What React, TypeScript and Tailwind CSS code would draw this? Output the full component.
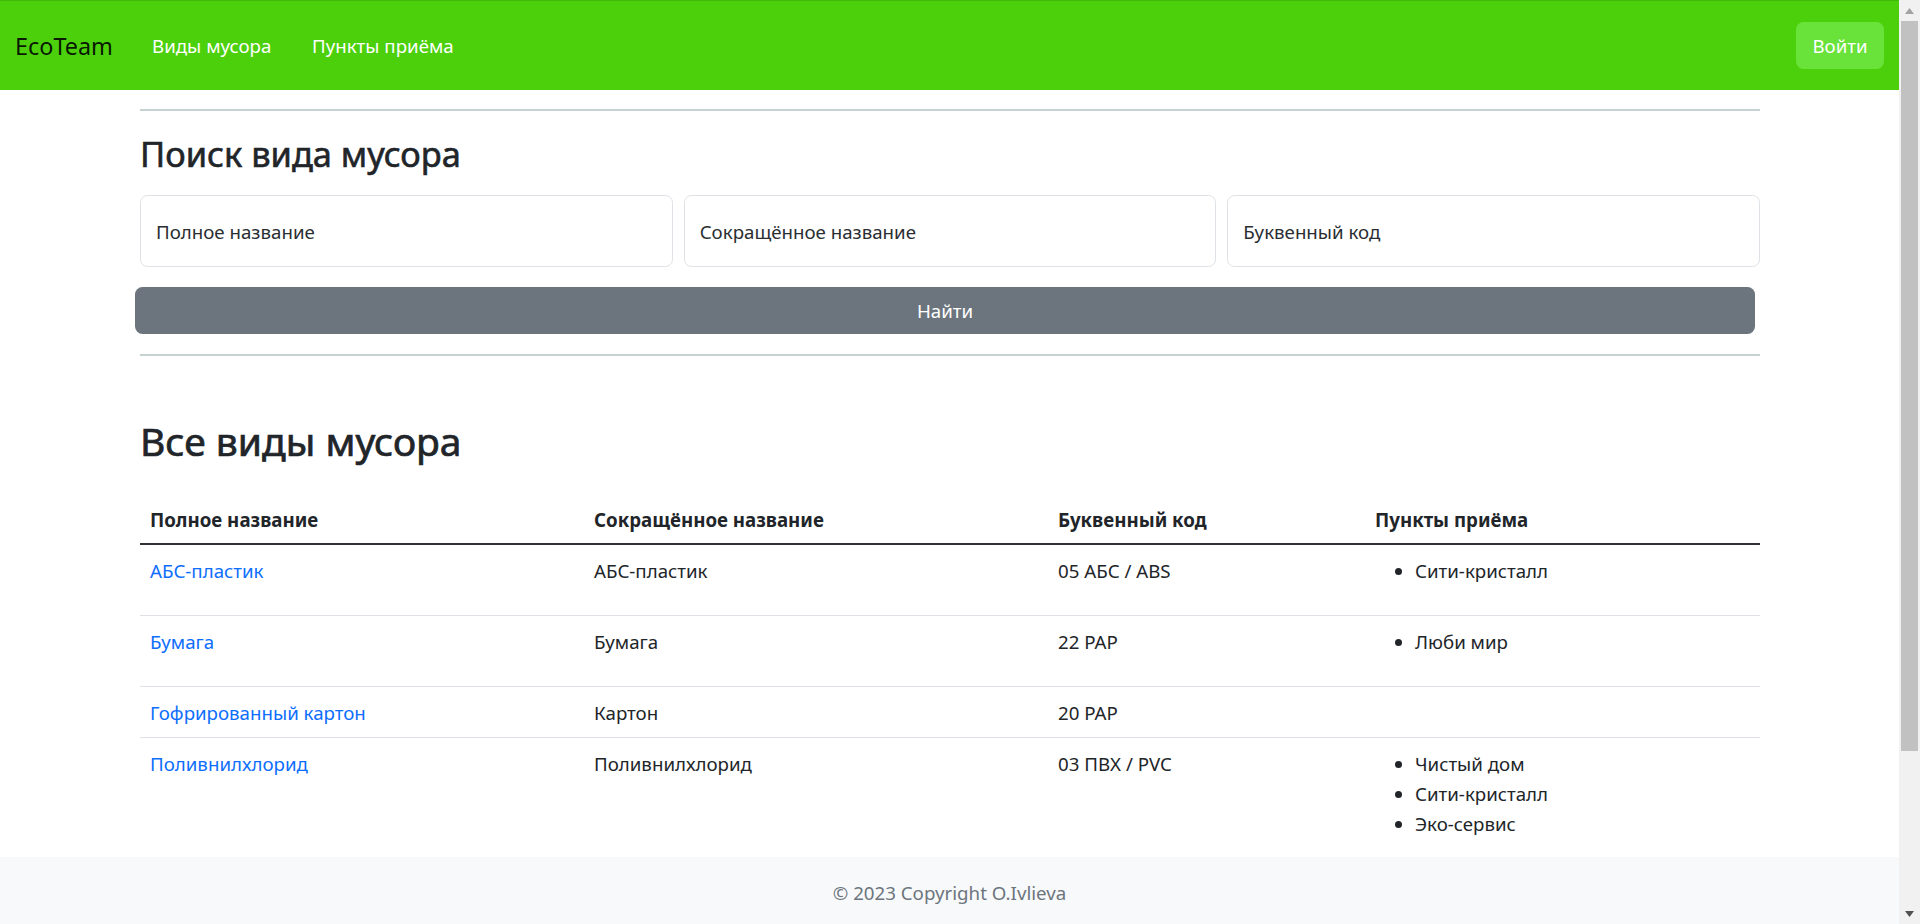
import React from "react";

type WasteRow = {
  full: string;
  short: string;
  code: string;
  points: string[];
};

const rows: WasteRow[] = [
  { full: "АБС-пластик", short: "АБС-пластик", code: "05 АБС / ABS", points: ["Сити-кристалл"] },
  { full: "Бумага", short: "Бумага", code: "22 PAP", points: ["Люби мир"] },
  { full: "Гофрированный картон", short: "Картон", code: "20 PAP", points: [] },
  {
    full: "Поливнилхлорид",
    short: "Поливнилхлорид",
    code: "03 ПВХ / PVC",
    points: ["Чистый дом", "Сити-кристалл", "Эко-сервис"],
  },
];

const Navbar = () => (
  <nav className="h-[90px] shrink-0 bg-[#4bd00b] border-t border-[#43b90b] flex items-center justify-between pl-[15px] pr-[15px]">
    <div className="flex items-center">
      <a href="#" className="w-[137px] text-[23.4px] leading-[30px] text-black/90">
        EcoTeam
      </a>
      <a href="#" className="w-[160px] text-[18.7px] leading-[30px] text-white">
        Виды мусора
      </a>
      <a href="#" className="text-[18.7px] leading-[30px] text-white">
        Пункты приёма
      </a>
    </div>
    <button className="h-[47px] w-[88px] rounded-[7.5px] bg-[#69e23a] text-white text-[18.7px] leading-[30px]">
      Войти
    </button>
  </nav>
);

const SearchField = ({ label }: { label: string }) => (
  <div className="h-[72px] rounded-[7.5px] border border-[#dee2e6] bg-white flex items-center px-[15px] pt-[1px]">
    <span className="text-[18.7px] leading-[30px] text-[#2a2e32]">{label}</span>
  </div>
);

const Scrollbar = () => (
  <div className="w-[21px] h-[924px] shrink-0 bg-[#f1f1f1] flex flex-col items-center">
    <div className="h-[21px] w-full flex items-center justify-center">
      <svg width="9" height="6" viewBox="0 0 9 6">
        <path d="M0 6 L4.5 0 L9 6 Z" fill="#a3a3a3" />
      </svg>
    </div>
    <div className="w-[17px] h-[730px] bg-[#c1c1c1]" />
    <div className="flex-1" />
    <div className="h-[21px] w-full flex items-center justify-center">
      <svg width="9" height="6" viewBox="0 0 9 6">
        <path d="M0 0 L9 0 L4.5 6 Z" fill="#505050" />
      </svg>
    </div>
  </div>
);

export default function App() {
  return (
    <div className="flex h-[924px] overflow-hidden bg-white font-['Noto_Sans',sans-serif] text-[#212529]">
      <div className="flex-1 min-w-0 h-[927px] flex flex-col">
        <Navbar />
        <main className="flex-1 overflow-hidden">
          <div className="w-[1620px] ml-[140px]">
            <div className="mt-[19px] h-[2px] bg-[#c4d2d2]" />
            <h3 className="mt-[22px] text-[34.4px] leading-[42px] font-normal [-webkit-text-stroke:0.6px_#212529]">
              Поиск вида мусора
            </h3>
            <div className="mt-[20px] grid grid-cols-3 gap-[11px]">
              <SearchField label="Полное название" />
              <SearchField label="Сокращённое название" />
              <SearchField label="Буквенный код" />
            </div>
            <button className="mt-[20px] -ml-[5px] w-[1620px] h-[47px] rounded-[7.5px] bg-[#6c757d] text-white text-[18.7px] leading-[30px] block">
              Найти
            </button>
            <div className="mt-[20px] h-[2px] bg-[#c4d2d2]" />
            <h2 className="mt-[61px] text-[39px] leading-[48px] font-normal [-webkit-text-stroke:0.7px_#212529]">
              Все виды мусора
            </h2>
            <table className="mt-[28px] w-full table-fixed border-separate border-spacing-0 text-[18.7px] leading-[30px]">
              <colgroup>
                <col className="w-[444px]" />
                <col className="w-[464px]" />
                <col className="w-[317px]" />
                <col className="w-[395px]" />
              </colgroup>
              <thead>
                <tr>
                  {["Полное название", "Сокращённое название", "Буквенный код", "Пункты приёма"].map((h) => (
                    <th key={h} className="text-left font-bold px-[10px] pt-[12px] pb-[8px] border-b-2 border-[#2f3337]">
                      {h}
                    </th>
                  ))}
                </tr>
              </thead>
              <tbody>
                {rows.map((r) => (
                  <tr key={r.full}>
                    <td className="align-top px-[10px] pt-[11px] pb-[9px] border-b border-[#dee2e6]">
                      <a href="#" className="text-[#0d6efd]">
                        {r.full}
                      </a>
                    </td>
                    <td className="align-top px-[10px] pt-[11px] pb-[9px] border-b border-[#dee2e6]">{r.short}</td>
                    <td className="align-top px-[10px] pt-[11px] pb-[9px] border-b border-[#dee2e6]">{r.code}</td>
                    <td className="align-top px-[10px] pt-[11px] pb-[9px] border-b border-[#dee2e6]">
                      {r.points.length > 0 && (
                        <ul className="list-disc pl-[40px] mb-[20px]">
                          {r.points.map((p) => (
                            <li key={p}>{p}</li>
                          ))}
                        </ul>
                      )}
                    </td>
                  </tr>
                ))}
              </tbody>
            </table>
          </div>
        </main>
        <footer className="h-[70px] shrink-0 bg-[#f8f9fa] pt-[21px] text-center text-[18.7px] leading-[30px] text-[#6c757d]">
          © 2023 Copyright O.Ivlieva
        </footer>
      </div>
      <Scrollbar />
    </div>
  );
}
